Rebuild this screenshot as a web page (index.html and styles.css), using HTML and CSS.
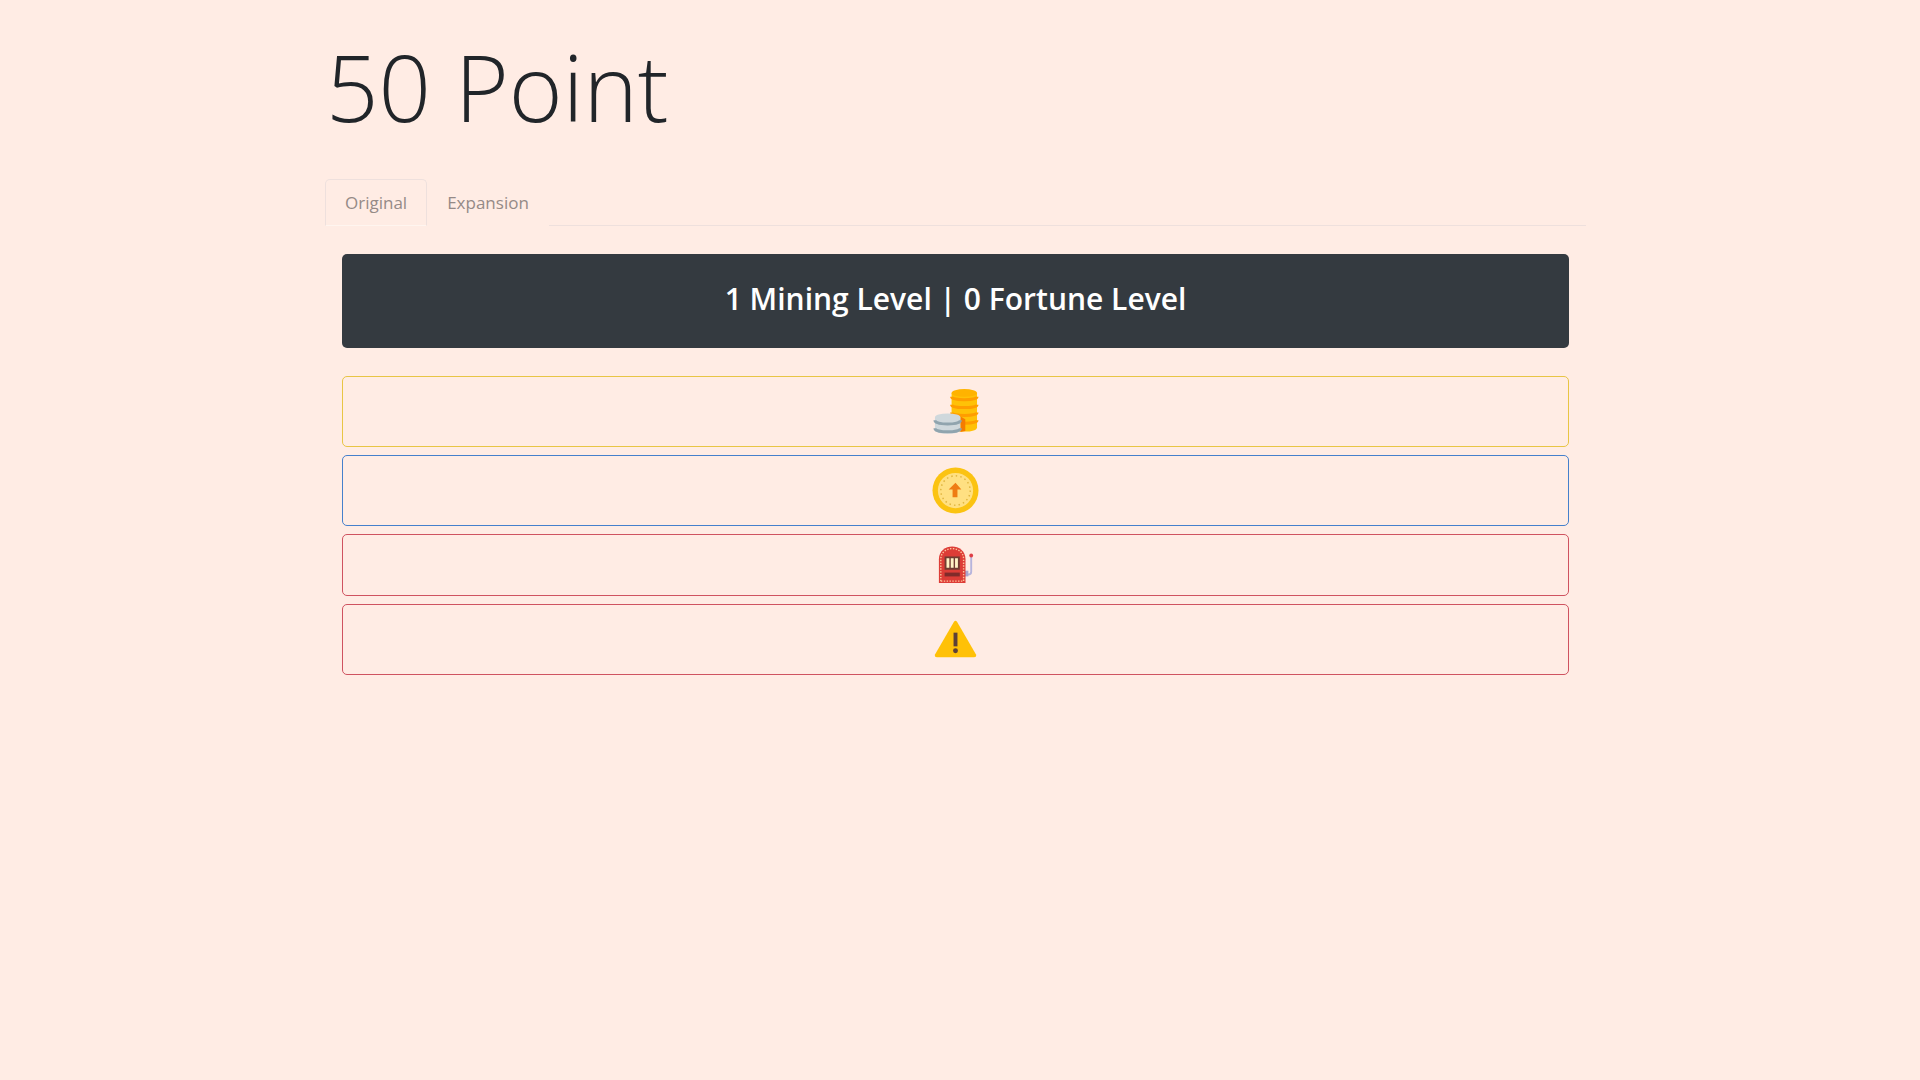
FILE: index.html
```html
<!DOCTYPE html>
<html lang="en">
<head>
<meta charset="utf-8">
<meta name="viewport" content="width=device-width, initial-scale=1">
<title>50 Point</title>
<link rel="stylesheet" href="styles.css">
</head>
<body>
<main class="container">
  <h1 class="points">50 Point</h1>
  <nav class="tabs">
    <a class="tab tab-active" href="#original">Original</a>
    <a class="tab" href="#expansion">Expansion</a>
    <span class="tabs-line"></span>
  </nav>
  <section class="panel" id="original">
    <h2 class="levels">1 Mining Level | 0 Fortune Level</h2>
    <div class="actions">
      <button class="action action-mine" type="button" aria-label="Mine">
        <svg class="icon" viewBox="0 0 48 48" aria-hidden="true">
          <path fill="#ffc107" d="M20 5v35c0 3 5 4.500 13 4.500s13-1.500 13-4.500V5z"/>
          <path fill="none" stroke="#ff9d00" stroke-width="3" d="M20 9c0 4 26 4 26 0M20 17c0 4 26 4 26 0M20 25c0 4 26 4 26 0M20 33c0 4 26 4 26 0"/>
          <ellipse cx="33" cy="5" rx="13" ry="4" fill="#ffb300"/>
          <path fill="#f57c00" d="M29 29l5 3v12l-5 1z"/>
          <path fill="#cfd8dc" d="M3 30v13c0 5 26 5 26 0V30z"/>
          <path fill="none" stroke="#90a4ae" stroke-width="3" d="M3 33c0 5 26 5 26 0M3 41c0 5 26 5 26 0"/>
          <ellipse cx="16" cy="30" rx="13" ry="4" fill="#cfd8dc"/>
        </svg>
      </button>
      <button class="action action-upgrade" type="button" aria-label="Upgrade">
        <svg class="icon" viewBox="0 0 48 48" aria-hidden="true">
          <circle cx="24" cy="24" r="23.500" fill="#fbc312"/>
          <circle cx="24" cy="24" r="18" fill="#ffe082"/>
          <circle cx="24" cy="24" r="15" fill="none" stroke="#dfb43e" stroke-width="1.500" stroke-dasharray="1.500 3.200"/>
          <path fill="#ef7c13" d="M24 16l6 7h-4v8h-5v-8h-4z"/>
        </svg>
      </button>
      <button class="action action-gamble" type="button" aria-label="Gamble">
        <svg class="icon icon-small" viewBox="0 0 40 40" aria-hidden="true">
          <path fill="none" stroke="#b7b4dc" stroke-width="2" d="M30 30h3q3 0 3-3V11"/>
          <path fill="#aaa4cf" d="M29 26h4v6h-4z"/>
          <path fill="#dd3d37" d="M2 39V14C2-4 30-4 30 14v25z"/>
          <path fill="none" stroke="#ffc19a" stroke-width="1.500" stroke-dasharray="1.500 1.500" d="M4 37V14C4-1 28-1 28 14v23z"/>
          <path fill="#713c32" d="M8 11h16v14H8z"/>
          <path fill="#fff2c5" d="M10 13h3v10h-3zM14.500 13h3v10h-3zM19 13h3v10h-3z"/>
          <path fill="#812b2a" d="M8 28h16v4H8z"/>
          <circle cx="36" cy="10" r="2" fill="#df3e45"/>
        </svg>
      </button>
      <button class="action action-warning" type="button" aria-label="Reset">
        <svg class="icon" viewBox="0 0 48 48" aria-hidden="true">
          <path fill="#ffc107" d="M22.300 6.200q1.700-2.800 3.400 0L44.800 39q1.200 3-2 3H5.200q-3.200 0-2-3z"/>
          <path fill="#5d4037" d="M22 17h4v14h-4z"/>
          <circle cx="24" cy="35.500" r="2.500" fill="#5d4037"/>
        </svg>
      </button>
    </div>
  </section>
</main>
</body>
</html>
```
FILE: styles.css
```css
* {
  box-sizing: border-box;
}

body {
  margin: 0;
  padding: 0 9px 0 0;
  min-height: 100vh;
  background: #ffece4;
  color: #212529;
  font-family: "Open Sans", "Noto Sans", sans-serif;
  font-size: 17px;
  line-height: 28px;
}

.container {
  max-width: 1295px;
  margin: 0 auto;
  padding: 28px 17px;
}

.points {
  margin: 0 0 33px;
  padding-left: 1px;
  font-size: 92px;
  font-weight: 300;
  line-height: 118px;
}

.tabs {
  display: flex;
}

.tab {
  padding: 9px 19px 8px;
  border: 1px solid transparent;
  border-radius: 5px 5px 0 0;
  color: #958a87;
  text-decoration: none;
}

.tab-active {
  border-color: #eee0dd;
  border-bottom-color: #fff5ef;
}

.tabs-line {
  flex: 1;
  border-bottom: 1px solid #eee0dd;
}

.panel {
  padding: 28px 17px;
}

.levels {
  margin: 0 0 28px;
  padding: 22px 24px 26px;
  border-radius: 5px;
  background: #343a40;
  color: #fff;
  font-size: 30px;
  font-weight: 600;
  line-height: 46px;
  text-align: center;
}

.actions {
  display: grid;
  gap: 8px;
}

.action {
  display: flex;
  justify-content: center;
  padding: 11px;
  border: 1px solid;
  border-radius: 5px;
  background: none;
}

.action-mine {
  border-color: #e8c545;
}

.action-upgrade {
  border-color: #4580cc;
}

.action-gamble,
.action-warning {
  border-color: #cf5360;
}

.icon {
  width: 47px;
  height: 47px;
}

.icon-small {
  width: 38px;
  height: 38px;
}
```
